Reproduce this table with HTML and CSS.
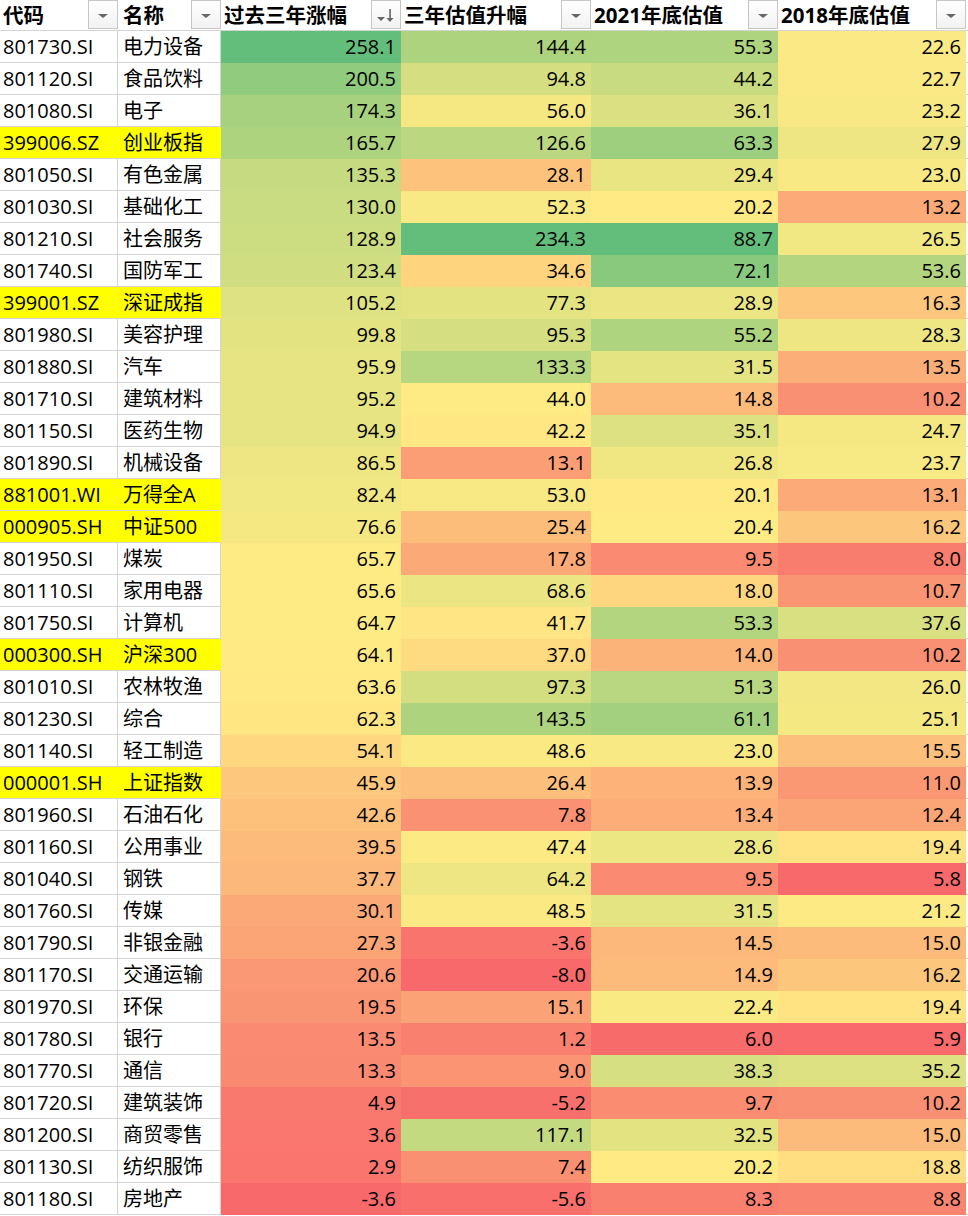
FILE: index.html
```html
<!DOCTYPE html>
<html lang="zh">
<head>
<meta charset="utf-8">
<title>估值表</title>
<link rel="stylesheet" href="styles.css">
</head>
<body>
<div class="sheet" id="sheet">
  <div class="row head">
    <div class="cell th"><span>代码</span><span class="btn"><svg width="12" height="6" viewBox="0 0 12 6"><polygon points="1,1 11,1 6,5" fill="#666"/></svg></span></div>
    <div class="cell th"><span>名称</span><span class="btn"><svg width="12" height="6" viewBox="0 0 12 6"><polygon points="1,1 11,1 6,5" fill="#666"/></svg></span></div>
    <div class="cell th"><span>过去三年涨幅</span><span class="btn"><svg width="22" height="16" viewBox="0 0 22 16"><polygon points="2,9 10,9 6,13" fill="#666"/><rect x="14.3" y="1" width="1.6" height="10" fill="#666"/><polygon points="11.5,10 18.5,10 15,14" fill="#666"/></svg></span></div>
    <div class="cell th"><span>三年估值升幅</span><span class="btn"><svg width="12" height="6" viewBox="0 0 12 6"><polygon points="1,1 11,1 6,5" fill="#666"/></svg></span></div>
    <div class="cell th"><span>2021年底估值</span><span class="btn"><svg width="12" height="6" viewBox="0 0 12 6"><polygon points="1,1 11,1 6,5" fill="#666"/></svg></span></div>
    <div class="cell th"><span>2018年底估值</span><span class="btn"><svg width="12" height="6" viewBox="0 0 12 6"><polygon points="1,1 11,1 6,5" fill="#666"/></svg></span></div>
    <div class="cell blank"></div>
  </div>
  <div class="row"><div class="cell">801730.SI</div><div class="cell">电力设备</div><div class="cell num">258.1</div><div class="cell num">144.4</div><div class="cell num">55.3</div><div class="cell num">22.6</div><div class="cell blank"></div></div>
  <div class="row"><div class="cell">801120.SI</div><div class="cell">食品饮料</div><div class="cell num">200.5</div><div class="cell num">94.8</div><div class="cell num">44.2</div><div class="cell num">22.7</div><div class="cell blank"></div></div>
  <div class="row"><div class="cell">801080.SI</div><div class="cell">电子</div><div class="cell num">174.3</div><div class="cell num">56.0</div><div class="cell num">36.1</div><div class="cell num">23.2</div><div class="cell blank"></div></div>
  <div class="row"><div class="cell hl">399006.SZ</div><div class="cell hl">创业板指</div><div class="cell num">165.7</div><div class="cell num">126.6</div><div class="cell num">63.3</div><div class="cell num">27.9</div><div class="cell blank"></div></div>
  <div class="row"><div class="cell">801050.SI</div><div class="cell">有色金属</div><div class="cell num">135.3</div><div class="cell num">28.1</div><div class="cell num">29.4</div><div class="cell num">23.0</div><div class="cell blank"></div></div>
  <div class="row"><div class="cell">801030.SI</div><div class="cell">基础化工</div><div class="cell num">130.0</div><div class="cell num">52.3</div><div class="cell num">20.2</div><div class="cell num">13.2</div><div class="cell blank"></div></div>
  <div class="row"><div class="cell">801210.SI</div><div class="cell">社会服务</div><div class="cell num">128.9</div><div class="cell num">234.3</div><div class="cell num">88.7</div><div class="cell num">26.5</div><div class="cell blank"></div></div>
  <div class="row"><div class="cell">801740.SI</div><div class="cell">国防军工</div><div class="cell num">123.4</div><div class="cell num">34.6</div><div class="cell num">72.1</div><div class="cell num">53.6</div><div class="cell blank"></div></div>
  <div class="row"><div class="cell hl">399001.SZ</div><div class="cell hl">深证成指</div><div class="cell num">105.2</div><div class="cell num">77.3</div><div class="cell num">28.9</div><div class="cell num">16.3</div><div class="cell blank"></div></div>
  <div class="row"><div class="cell">801980.SI</div><div class="cell">美容护理</div><div class="cell num">99.8</div><div class="cell num">95.3</div><div class="cell num">55.2</div><div class="cell num">28.3</div><div class="cell blank"></div></div>
  <div class="row"><div class="cell">801880.SI</div><div class="cell">汽车</div><div class="cell num">95.9</div><div class="cell num">133.3</div><div class="cell num">31.5</div><div class="cell num">13.5</div><div class="cell blank"></div></div>
  <div class="row"><div class="cell">801710.SI</div><div class="cell">建筑材料</div><div class="cell num">95.2</div><div class="cell num">44.0</div><div class="cell num">14.8</div><div class="cell num">10.2</div><div class="cell blank"></div></div>
  <div class="row"><div class="cell">801150.SI</div><div class="cell">医药生物</div><div class="cell num">94.9</div><div class="cell num">42.2</div><div class="cell num">35.1</div><div class="cell num">24.7</div><div class="cell blank"></div></div>
  <div class="row"><div class="cell">801890.SI</div><div class="cell">机械设备</div><div class="cell num">86.5</div><div class="cell num">13.1</div><div class="cell num">26.8</div><div class="cell num">23.7</div><div class="cell blank"></div></div>
  <div class="row"><div class="cell hl">881001.WI</div><div class="cell hl">万得全A</div><div class="cell num">82.4</div><div class="cell num">53.0</div><div class="cell num">20.1</div><div class="cell num">13.1</div><div class="cell blank"></div></div>
  <div class="row"><div class="cell hl">000905.SH</div><div class="cell hl">中证500</div><div class="cell num">76.6</div><div class="cell num">25.4</div><div class="cell num">20.4</div><div class="cell num">16.2</div><div class="cell blank"></div></div>
  <div class="row"><div class="cell">801950.SI</div><div class="cell">煤炭</div><div class="cell num">65.7</div><div class="cell num">17.8</div><div class="cell num">9.5</div><div class="cell num">8.0</div><div class="cell blank"></div></div>
  <div class="row"><div class="cell">801110.SI</div><div class="cell">家用电器</div><div class="cell num">65.6</div><div class="cell num">68.6</div><div class="cell num">18.0</div><div class="cell num">10.7</div><div class="cell blank"></div></div>
  <div class="row"><div class="cell">801750.SI</div><div class="cell">计算机</div><div class="cell num">64.7</div><div class="cell num">41.7</div><div class="cell num">53.3</div><div class="cell num">37.6</div><div class="cell blank"></div></div>
  <div class="row"><div class="cell hl">000300.SH</div><div class="cell hl">沪深300</div><div class="cell num">64.1</div><div class="cell num">37.0</div><div class="cell num">14.0</div><div class="cell num">10.2</div><div class="cell blank"></div></div>
  <div class="row"><div class="cell">801010.SI</div><div class="cell">农林牧渔</div><div class="cell num">63.6</div><div class="cell num">97.3</div><div class="cell num">51.3</div><div class="cell num">26.0</div><div class="cell blank"></div></div>
  <div class="row"><div class="cell">801230.SI</div><div class="cell">综合</div><div class="cell num">62.3</div><div class="cell num">143.5</div><div class="cell num">61.1</div><div class="cell num">25.1</div><div class="cell blank"></div></div>
  <div class="row"><div class="cell">801140.SI</div><div class="cell">轻工制造</div><div class="cell num">54.1</div><div class="cell num">48.6</div><div class="cell num">23.0</div><div class="cell num">15.5</div><div class="cell blank"></div></div>
  <div class="row"><div class="cell hl">000001.SH</div><div class="cell hl">上证指数</div><div class="cell num">45.9</div><div class="cell num">26.4</div><div class="cell num">13.9</div><div class="cell num">11.0</div><div class="cell blank"></div></div>
  <div class="row"><div class="cell">801960.SI</div><div class="cell">石油石化</div><div class="cell num">42.6</div><div class="cell num">7.8</div><div class="cell num">13.4</div><div class="cell num">12.4</div><div class="cell blank"></div></div>
  <div class="row"><div class="cell">801160.SI</div><div class="cell">公用事业</div><div class="cell num">39.5</div><div class="cell num">47.4</div><div class="cell num">28.6</div><div class="cell num">19.4</div><div class="cell blank"></div></div>
  <div class="row"><div class="cell">801040.SI</div><div class="cell">钢铁</div><div class="cell num">37.7</div><div class="cell num">64.2</div><div class="cell num">9.5</div><div class="cell num">5.8</div><div class="cell blank"></div></div>
  <div class="row"><div class="cell">801760.SI</div><div class="cell">传媒</div><div class="cell num">30.1</div><div class="cell num">48.5</div><div class="cell num">31.5</div><div class="cell num">21.2</div><div class="cell blank"></div></div>
  <div class="row"><div class="cell">801790.SI</div><div class="cell">非银金融</div><div class="cell num">27.3</div><div class="cell num">-3.6</div><div class="cell num">14.5</div><div class="cell num">15.0</div><div class="cell blank"></div></div>
  <div class="row"><div class="cell">801170.SI</div><div class="cell">交通运输</div><div class="cell num">20.6</div><div class="cell num">-8.0</div><div class="cell num">14.9</div><div class="cell num">16.2</div><div class="cell blank"></div></div>
  <div class="row"><div class="cell">801970.SI</div><div class="cell">环保</div><div class="cell num">19.5</div><div class="cell num">15.1</div><div class="cell num">22.4</div><div class="cell num">19.4</div><div class="cell blank"></div></div>
  <div class="row"><div class="cell">801780.SI</div><div class="cell">银行</div><div class="cell num">13.5</div><div class="cell num">1.2</div><div class="cell num">6.0</div><div class="cell num">5.9</div><div class="cell blank"></div></div>
  <div class="row"><div class="cell">801770.SI</div><div class="cell">通信</div><div class="cell num">13.3</div><div class="cell num">9.0</div><div class="cell num">38.3</div><div class="cell num">35.2</div><div class="cell blank"></div></div>
  <div class="row"><div class="cell">801720.SI</div><div class="cell">建筑装饰</div><div class="cell num">4.9</div><div class="cell num">-5.2</div><div class="cell num">9.7</div><div class="cell num">10.2</div><div class="cell blank"></div></div>
  <div class="row"><div class="cell">801200.SI</div><div class="cell">商贸零售</div><div class="cell num">3.6</div><div class="cell num">117.1</div><div class="cell num">32.5</div><div class="cell num">15.0</div><div class="cell blank"></div></div>
  <div class="row"><div class="cell">801130.SI</div><div class="cell">纺织服饰</div><div class="cell num">2.9</div><div class="cell num">7.4</div><div class="cell num">20.2</div><div class="cell num">18.8</div><div class="cell blank"></div></div>
  <div class="row"><div class="cell">801180.SI</div><div class="cell">房地产</div><div class="cell num">-3.6</div><div class="cell num">-5.6</div><div class="cell num">8.3</div><div class="cell num">8.8</div><div class="cell blank"></div></div>
</div>
<script src="script.js"></script>
</body>
</html>
```

FILE: styles.css
```css
body {
  margin: 0;
  background: #ffffff;
  color: #000000;
  font-family: "Open Sans", "Noto Sans CJK SC", sans-serif;
  font-size: 20px;
}

.sheet {
  width: 968px;
}

.row {
  display: grid;
  grid-template-columns: 118px 103px 180px 190px 187px 188px 1fr;
  height: 32px;
}

.row.head {
  height: 31px;
}

.cell {
  box-sizing: border-box;
  border-right: 1px solid #d4d4d4;
  border-bottom: 1px solid #d4d4d4;
  display: flex;
  align-items: center;
  padding: 0 4px 0 3px;
  white-space: nowrap;
  overflow: hidden;
  line-height: 1;
}

.cell:nth-child(2) {
  padding-left: 5px;
}

.num {
  justify-content: flex-end;
  background: var(--bg, #ffffff);
  border-color: var(--bg, #d4d4d4);
}

.hl {
  background: #ffff00;
  border-right-color: #ffff00;
}

.th {
  font-weight: bold;
  justify-content: space-between;
  align-items: stretch;
  padding-right: 0;
  border-right: none;
}

.th > span:first-child {
  display: flex;
  align-items: center;
  font-family: "Noto Sans", "Noto Sans CJK SC", sans-serif;
  font-size: 20.5px;
}

.btn {
  box-sizing: border-box;
  width: 30px;
  height: 29px;
  border: 1px solid #c6c6c6;
  background: linear-gradient(#ffffff, #f2f2f2);
  display: flex;
  align-items: center;
  justify-content: center;
  padding-top: 3px;
}

.blank {
  border-right: none;
}
```

FILE: script.js
```js
(function () {
  var red = [248, 105, 107], yel = [255, 235, 132], grn = [99, 190, 123];
  var rows = document.querySelectorAll('.row:not(.head)');
  var cols = [[], [], [], []];
  rows.forEach(function (r) {
    r.querySelectorAll('.num').forEach(function (c, i) {
      cols[i].push({ el: c, v: parseFloat(c.textContent) });
    });
  });
  /* the two valuation columns share one colour scale */
  var groups = [cols[0], cols[1], cols[2].concat(cols[3])];
  function mix(a, b, t) {
    return 'rgb(' + [0, 1, 2].map(function (k) { return Math.round(a[k] + (b[k] - a[k]) * t); }).join(',') + ')';
  }
  groups.forEach(function (col) {
    var vals = col.map(function (o) { return o.v; }).sort(function (a, b) { return a - b; });
    var min = vals[0], max = vals[vals.length - 1];
    var p = (vals.length - 1) * 0.5, lo = Math.floor(p);
    var mid = vals[lo] + (vals[Math.min(lo + 1, vals.length - 1)] - vals[lo]) * (p - lo);
    col.forEach(function (o) {
      var c;
      if (o.v <= mid) c = mix(red, yel, (o.v - min) / (mid - min || 1));
      else c = mix(yel, grn, (o.v - mid) / (max - mid || 1));
      o.el.style.setProperty('--bg', c);
    });
  });
})();
```
